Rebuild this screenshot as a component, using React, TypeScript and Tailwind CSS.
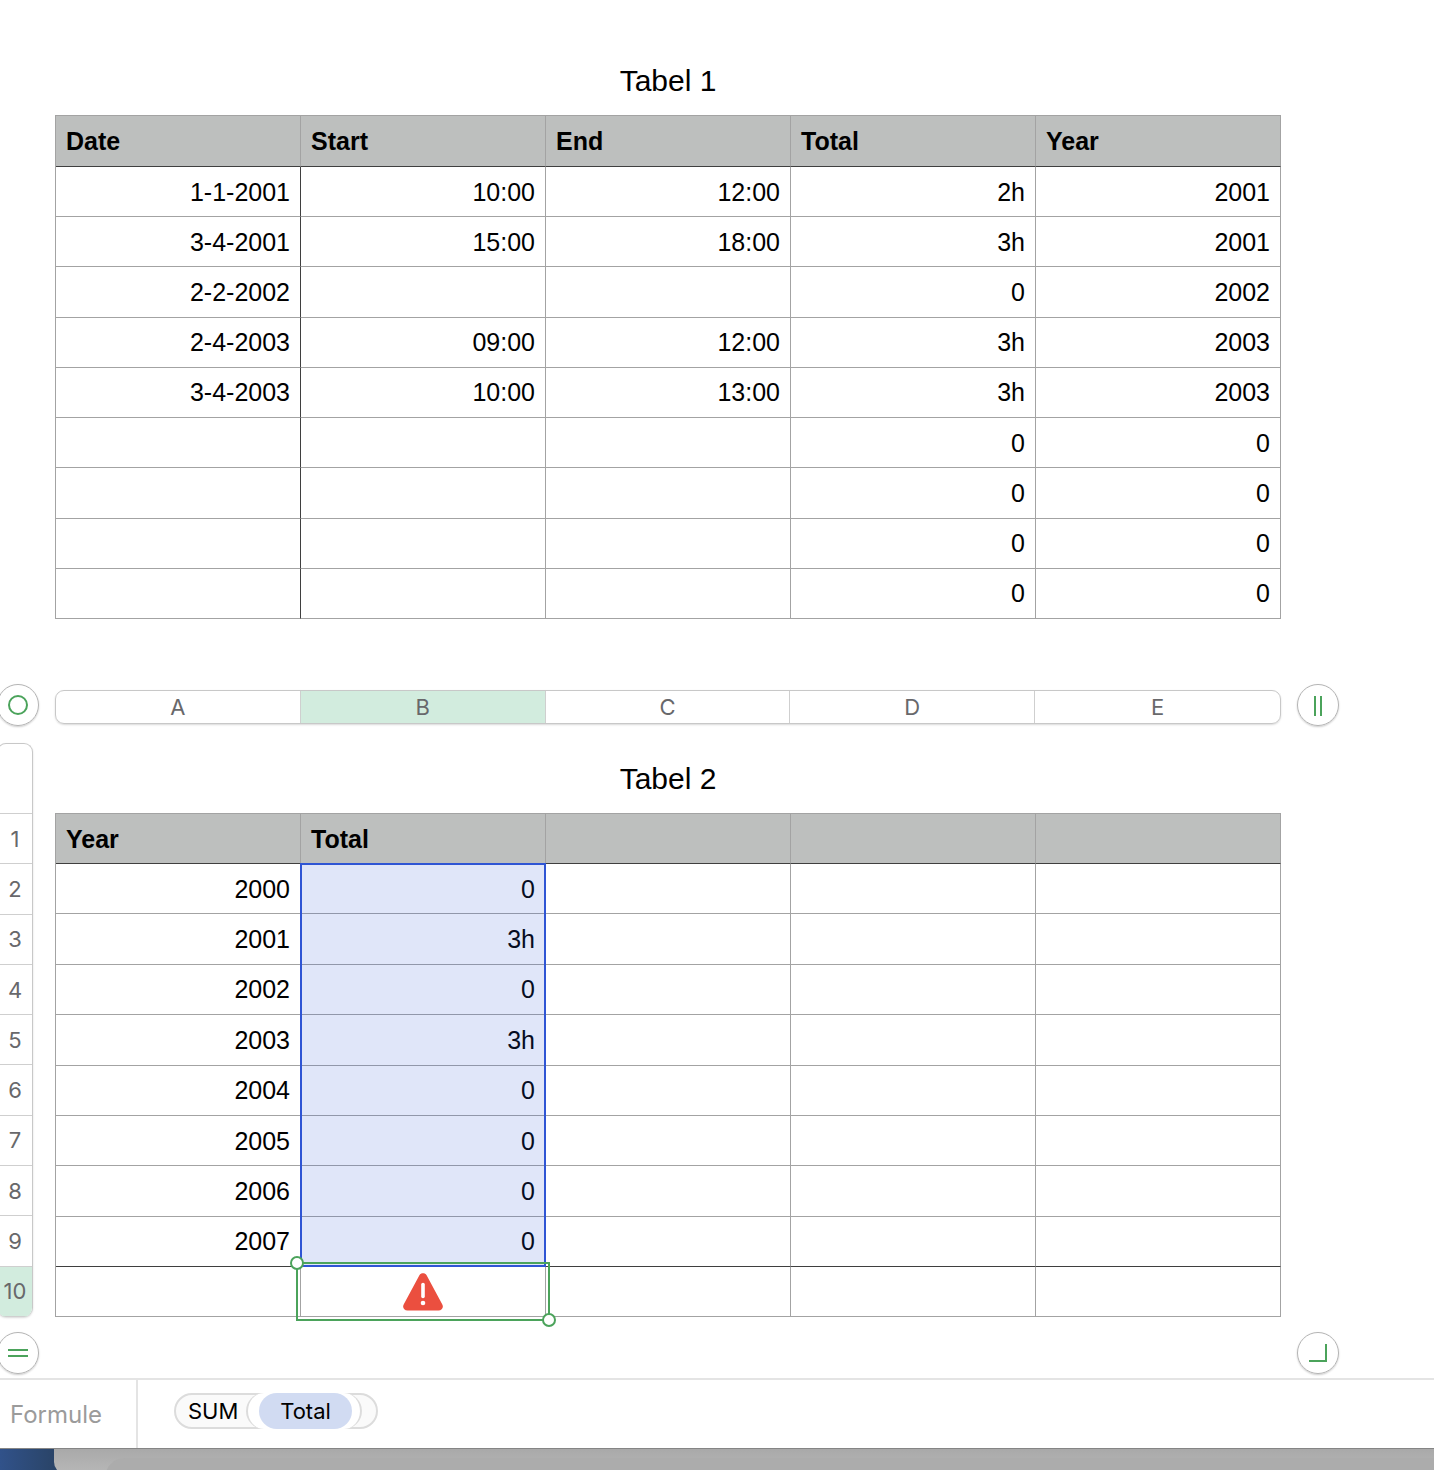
import clsx from "clsx";

type Row = string[];

const hoursHead = ["Date", "Start", "End", "Total", "Year"];
const hoursRows: Row[] = [
  ["1-1-2001", "10:00", "12:00", "2h", "2001"],
  ["3-4-2001", "15:00", "18:00", "3h", "2001"],
  ["2-2-2002", "", "", "0", "2002"],
  ["2-4-2003", "09:00", "12:00", "3h", "2003"],
  ["3-4-2003", "10:00", "13:00", "3h", "2003"],
  ["", "", "", "0", "0"],
  ["", "", "", "0", "0"],
  ["", "", "", "0", "0"],
  ["", "", "", "0", "0"],
];

const yearHead = ["Year", "Total", "", "", ""];
const yearRows: Row[] = [
  ["2000", "0", "", "", ""],
  ["2001", "3h", "", "", ""],
  ["2002", "0", "", "", ""],
  ["2003", "3h", "", "", ""],
  ["2004", "0", "", "", ""],
  ["2005", "0", "", "", ""],
  ["2006", "0", "", "", ""],
  ["2007", "0", "", "", ""],
];

const columns = ["A", "B", "C", "D", "E"];
const rowNumbers = ["1", "2", "3", "4", "5", "6", "7", "8", "9", "10"];

const tableClass =
  "w-full h-[504px] table-fixed border-separate border-spacing-0 border-l border-t border-[#a3a3a3] text-[25px] leading-7";

function WarningIcon() {
  return (
    <svg className="w-10 h-[38px] mx-auto" viewBox="0 0 40 38" role="img" aria-label="Error">
      <path
        d="M16.4 2.2C18 -.4 22 -.4 23.6 2.2L39.2 31.2C41 34.2 39 37.5 35.5 37.5H4.5C1 37.5 -1 34.2 .8 31.2Z"
        fill="#eb4f3f"
      />
      <path d="M20 11.5V23.5" stroke="#fff" strokeWidth="3.6" strokeLinecap="round" />
      <circle cx="20" cy="30" r="2.3" fill="#fff" />
    </svg>
  );
}

function HeadRow({ labels, className }: { labels: string[]; className: string }) {
  return (
    <thead>
      <tr className={className}>
        {labels.map((label, i) => (
          <th
            key={i}
            className="px-[10px] bg-[#bdbfbe] border-r border-r-[#a3a3a3] border-b border-b-[#3f3f3f] text-left font-bold"
          >
            {label}
          </th>
        ))}
      </tr>
    </thead>
  );
}

function RoundButton({ label, children }: { label: string; children: React.ReactNode }) {
  return (
    <button
      type="button"
      aria-label={label}
      className="block w-[42px] h-[42px] shrink-0 rounded-full bg-white shadow-[0_1px_2px_rgba(0,0,0,0.2)]"
    >
      <svg className="w-full h-full" viewBox="0 0 42 42" fill="none" stroke="#4ba35b" strokeWidth="2">
        <circle cx="21" cy="21" r="20.5" stroke="#b4b4b4" strokeWidth="1" />
        {children}
      </svg>
    </button>
  );
}

function HoursTable() {
  return (
    <table className={tableClass}>
      <HeadRow labels={hoursHead} className="h-[51px]" />
      <tbody>
        {hoursRows.map((row, r) => (
          <tr key={r} className="h-[50px]">
            {row.map((cell, c) => (
              <td
                key={c}
                className={clsx(
                  "px-[10px] border-r border-b border-b-[#a3a3a3] text-right",
                  c === 0 ? "border-r-[#3f3f3f]" : "border-r-[#a3a3a3]"
                )}
              >
                {cell}
              </td>
            ))}
          </tr>
        ))}
      </tbody>
    </table>
  );
}

function YearTable() {
  return (
    <div className="relative">
      <table className={tableClass}>
        <HeadRow labels={yearHead} className="h-[50px]" />
        <tbody>
          {yearRows.map((row, r) => (
            <tr key={r} className="h-[50px]">
              {row.map((cell, c) => (
                <td
                  key={c}
                  className={clsx(
                    "px-[10px] border-r border-r-[#a3a3a3] border-b text-right",
                    r === yearRows.length - 1 ? "border-b-[#3f3f3f]" : "border-b-[#a3a3a3]"
                  )}
                >
                  {cell}
                </td>
              ))}
            </tr>
          ))}
        </tbody>
        <tfoot>
          <tr className="h-[50px]">
            {columns.map((name) => (
              <td key={name} className="px-[10px] border-r border-b border-[#a3a3a3]">
                {name === "B" && <WarningIcon />}
              </td>
            ))}
          </tr>
        </tfoot>
      </table>

      {/* range used by the formula */}
      <div className="absolute left-[20%] right-[calc(60%-1px)] top-[50px] bottom-[50px] border-2 border-[#2f55d4] bg-[#2f55d4]/15" />

      {/* selected cell with its drag handles */}
      <div className="absolute left-[calc(20%-4px)] right-[calc(60%-5px)] -bottom-1 h-[59px] border-2 border-[#4ba35b]">
        <span className="absolute -left-2 -top-2 w-[14px] h-[14px] rounded-full border-2 border-[#4ba35b] bg-white" />
        <span className="absolute -right-2 -bottom-2 w-[14px] h-[14px] rounded-full border-2 border-[#4ba35b] bg-white" />
      </div>
    </div>
  );
}

function ColumnBar() {
  return (
    <div className="grid grid-cols-5 h-[34px] mt-1 rounded-[9px] border border-[#c8c8c8] overflow-hidden shadow-[0_1px_2px_rgba(0,0,0,0.15)]">
      {columns.map((name) => (
        <button
          key={name}
          type="button"
          className={clsx(
            "border-[#cfcfcf] text-[22px] leading-8 text-[#68686b]",
            name !== "E" && "border-r",
            name === "B" && "bg-[#d2ecde]"
          )}
        >
          {name}
        </button>
      ))}
    </div>
  );
}

function RowBar() {
  return (
    <div className="w-9 -ml-[3px] flex flex-col rounded-[9px] border-x border-t border-[#c8c8c8] overflow-hidden shadow-[0_1px_2px_rgba(0,0,0,0.15)]">
      <div className="h-[69px]" />
      <div className="h-[504px] flex flex-col border-t border-[#cfcfcf]">
        {rowNumbers.map((n) => (
          <button
            key={n}
            type="button"
            className={clsx(
              "flex-1 border-b border-[#cfcfcf] text-[22px] leading-8 text-[#68686b]",
              n === "10" && "bg-[#d2ecde]"
            )}
          >
            {n}
          </button>
        ))}
      </div>
    </div>
  );
}

function FormulaBar() {
  return (
    <div className="flex h-[70px] border-t-2 border-[#e4e4e4] bg-white">
      <div className="w-[138px] shrink-0 flex items-center pl-[10px] pt-0.5 border-r-2 border-[#e4e4e4] text-2xl text-[#9b9b9b]">
        Formule
      </div>
      <div className="pl-9 pt-[13px]">
        <div className="flex h-9 rounded-full border-2 border-[#dcdcdc] bg-[#fafafa] text-[22px] leading-8">
          <span className="w-[70px] pl-3">SUM</span>
          <span className="flex h-9 -my-0.5 pl-[11px] pr-2 rounded-full border-x-2 border-[#dcdcdc] bg-white">
            <button type="button" className="w-[93px] rounded-full bg-[#d1dbf2]">
              Total
            </button>
          </span>
          <span className="w-[14px]" />
        </div>
      </div>
    </div>
  );
}

export default function App() {
  return (
    <div className="min-h-screen flex flex-col bg-white text-black font-['Inter',sans-serif]">
      <main className="grid grid-cols-[55px_1fr_153px] font-['Liberation_Sans',Arial,sans-serif]">
        <section className="col-start-2 pt-[45px]">
          <h2 className="h-[70px] flex items-center justify-center text-[30px]">Tabel 1</h2>
          <HoursTable />
        </section>
      </main>

      <section className="grid grid-cols-[55px_1fr_153px] pt-[65px]">
        <div className="-ml-[3px]">
          <RoundButton label="Select table">
            <circle cx="21" cy="21" r="9" />
          </RoundButton>
        </div>
        <div className="flex flex-col justify-center">
          <ColumnBar />
        </div>
        <div className="pl-4">
          <RoundButton label="Add column">
            <path d="M18 12V32M24 12V32" />
          </RoundButton>
        </div>
      </section>

      <section className="grid grid-cols-[55px_1fr_153px] pt-[17px]">
        <RowBar />
        <div className="font-['Liberation_Sans',Arial,sans-serif]">
          <h2 className="h-[70px] flex items-center justify-center text-[30px]">Tabel 2</h2>
          <YearTable />
        </div>
      </section>

      <section className="flex justify-between pt-[15px] pb-1 -ml-[3px] pr-[95px]">
        <RoundButton label="Add row">
          <path d="M11 18H31M11 24H31" />
        </RoundButton>
        <RoundButton label="Add rows and columns">
          <path d="M29 12V29H12" />
        </RoundButton>
      </section>

      <FormulaBar />

      {/* windows showing behind this one */}
      <div className="flex-1 min-h-[22px] flex pl-[54px] overflow-hidden border-t border-[#858585] bg-linear-to-r from-[#31528a] from-0% to-[#2a4468] to-[54px]">
        <div className="flex-1 flex pl-[51px] pt-[9px] -mb-1 rounded-bl-xl bg-linear-to-b from-[#a9a9a9] to-[#b8b8b8] overflow-hidden">
          <div className="flex-1 -mb-3 rounded-tl-[20px] bg-[#acacac]" />
        </div>
      </div>
    </div>
  );
}
